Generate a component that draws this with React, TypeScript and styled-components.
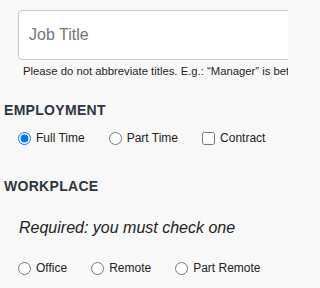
import styled, { createGlobalStyle } from 'styled-components'

const GlobalStyle = createGlobalStyle`
  html, body {
    margin: 0;
    padding: 0;
    background: #f8f8f8;
    overflow: hidden;
  }
  body {
    font-family: "Liberation Sans", Arial, sans-serif;
    color: #222;
  }
`

const Form = styled.form`
  display: flex;
  flex-direction: column;
  padding-top: 10px;
  width: 288px;
  height: 288px;
  box-sizing: border-box;
  overflow: hidden;
`

const TextInput = styled.input`
  box-sizing: border-box;
  flex: none;
  margin: 0 0 0 18px;
  width: 300px;
  height: 50px;
  padding: 0 10px;
  border: 1px solid #c8c8c8;
  border-radius: 4px;
  background: #fff;
  font-family: "Liberation Sans", Arial, sans-serif;
  font-size: 16px;
  color: #222;
  outline: none;

  &::placeholder {
    color: #757575;
  }
`

const Help = styled.p`
  margin: 5px 0 0;
  padding-left: 23px;
  font-size: 11.3px;
  line-height: 13px;
  white-space: nowrap;
  color: #1e1e1e;
`

const Heading = styled.h3<{ $top: number }>`
  margin: ${({ $top }) => $top}px 0 0;
  padding-left: 4px;
  font-size: 14px;
  line-height: 16px;
  font-weight: 700;
  letter-spacing: 0.3px;
  color: #2e3640;
`

const Options = styled.div<{ $top: number }>`
  display: flex;
  align-items: center;
  gap: 24px;
  margin-top: ${({ $top }) => $top}px;
  padding-left: 18px;
  height: 16px;
  flex: none;
`

const Option = styled.label`
  display: inline-flex;
  align-items: center;
  gap: 5px;
  font-size: 12px;
  line-height: 16px;
  color: #222;
  white-space: nowrap;

  input {
    margin: 0;
    width: 13px;
    height: 13px;
  }
`

const Note = styled.p`
  margin: 25px 0 0;
  padding-left: 19px;
  font-size: 16px;
  line-height: 18px;
  font-style: italic;
  color: #222;
`

const App = () => {
  return (
    <>
      <GlobalStyle />
      <Form onSubmit={(e) => e.preventDefault()}>
        <TextInput type="text" placeholder="Job Title" />
        <Help>Please do not abbreviate titles. E.g.: “Manager” is better than “Mgr”.</Help>

        <Heading $top={24}>EMPLOYMENT</Heading>
        <Options $top={12}>
          <Option>
            <input type="radio" name="employment" defaultChecked />
            Full Time
          </Option>
          <Option>
            <input type="radio" name="employment" />
            Part Time
          </Option>
          <Option>
            <input type="checkbox" name="contract" />
            Contract
          </Option>
        </Options>

        <Heading $top={32}>WORKPLACE</Heading>
        <Note>Required: you must check one</Note>
        <Options $top={23}>
          <Option>
            <input type="radio" name="workplace" />
            Office
          </Option>
          <Option>
            <input type="radio" name="workplace" />
            Remote
          </Option>
          <Option>
            <input type="radio" name="workplace" />
            Part Remote
          </Option>
        </Options>
      </Form>
    </>
  )
}

export default App
